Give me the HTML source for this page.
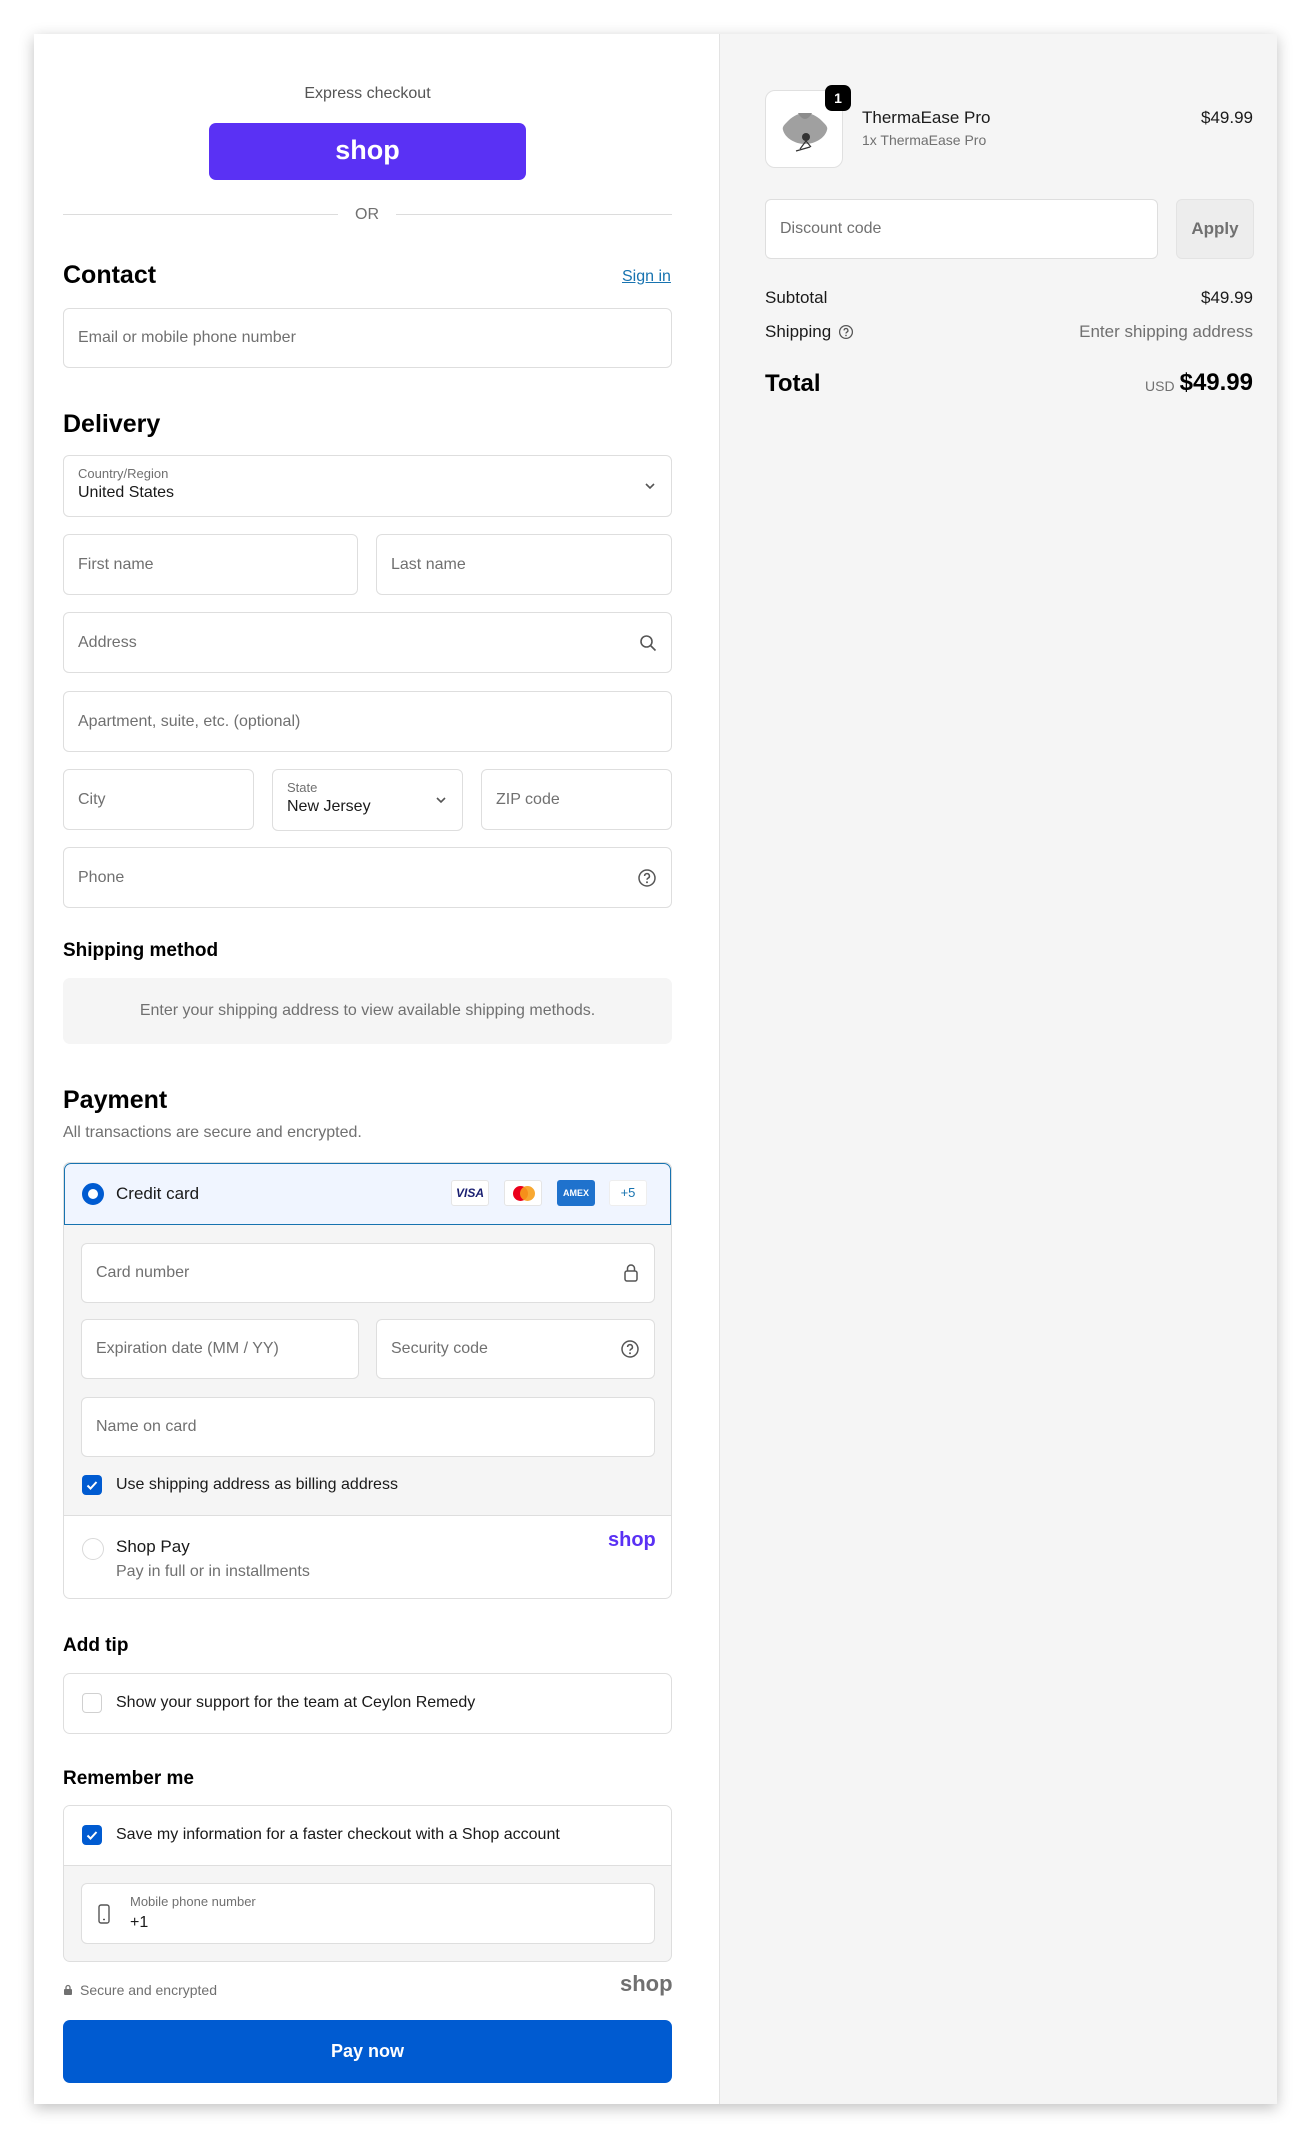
<!DOCTYPE html>
<html><head><meta charset="utf-8">
<style>
*{box-sizing:border-box;margin:0;padding:0}
html,body{width:1312px;height:2138px;background:#fff;font-family:"Liberation Sans",sans-serif;color:#1a1a1a;overflow:hidden}
.a{position:absolute}
#card{position:absolute;left:34px;top:34px;width:1243px;height:2070px;background:#fff;box-shadow:0 4px 14px rgba(0,0,0,.25)}
#right{position:absolute;left:719px;top:34px;width:558px;height:2070px;background:#f5f5f5;border-left:1px solid #e3e3e3}
.in{position:absolute;background:#fff;border:1px solid #dedede;border-radius:6px;font-size:16px;color:#707070}
.in .t{position:absolute;left:14px;top:50%;transform:translateY(-50%);white-space:nowrap}
.lab{position:absolute;left:14px;top:10px;font-size:13px;color:#707070}
.val{position:absolute;left:14px;top:28px;font-size:16px;color:#1a1a1a}
h2{position:absolute;font-size:25px;font-weight:bold;color:#000}
h3{position:absolute;font-size:19px;font-weight:bold;color:#000}
.ic{position:absolute;right:14px;top:50%;transform:translateY(-50%)}
.chk{position:absolute;width:20px;height:20px;border-radius:4px;background:#005bd1}
.box{position:absolute;width:20px;height:20px;border-radius:4px;border:1px solid #d0d0d0;background:#fff}
</style></head><body>
<div id="card"></div>
<div id="right"></div>

<div class="a" style="left:209px;top:85px;width:317px;text-align:center;font-size:16px;color:#555">Express checkout</div>
<div class="a" style="left:209px;top:123px;width:317px;height:57px;background:#5a31f4;border-radius:7px;color:#fff;font-weight:bold;font-size:27px;text-align:center;line-height:54px">shop</div>
<div class="a" style="left:63px;top:214px;width:275px;height:1px;background:#dcdcdc"></div>
<div class="a" style="left:396px;top:214px;width:276px;height:1px;background:#dcdcdc"></div>
<div class="a" style="left:338px;top:206px;width:58px;text-align:center;font-size:16px;color:#707070">OR</div>

<h2 style="left:63px;top:261px">Contact</h2>
<div class="a" style="left:622px;top:268px;font-size:16px;color:#1773b0;text-decoration:underline">Sign in</div>
<div class="in" style="left:63px;top:308px;width:609px;height:60px"><span class="t">Email or mobile phone number</span></div>

<h2 style="left:63px;top:410px">Delivery</h2>
<div class="in" style="left:63px;top:455px;width:609px;height:62px"><span class="lab">Country/Region</span><span class="val">United States</span>
<svg class="ic" width="14" height="14" viewBox="0 0 14 14"><path d="M3 5l4 4 4-4" fill="none" stroke="#555" stroke-width="1.6"/></svg></div>
<div class="in" style="left:63px;top:534px;width:295px;height:61px"><span class="t">First name</span></div>
<div class="in" style="left:376px;top:534px;width:296px;height:61px"><span class="t">Last name</span></div>
<div class="in" style="left:63px;top:612px;width:609px;height:61px"><span class="t">Address</span>
<svg class="ic" width="18" height="18" viewBox="0 0 18 18"><circle cx="7.5" cy="7.5" r="5.5" fill="none" stroke="#555" stroke-width="1.6"/><path d="M11.5 11.5l5 5" stroke="#555" stroke-width="1.6"/></svg></div>
<div class="in" style="left:63px;top:691px;width:609px;height:61px"><span class="t">Apartment, suite, etc. (optional)</span></div>
<div class="in" style="left:63px;top:769px;width:191px;height:61px"><span class="t">City</span></div>
<div class="in" style="left:272px;top:769px;width:191px;height:62px"><span class="lab">State</span><span class="val">New Jersey</span>
<svg class="ic" width="14" height="14" viewBox="0 0 14 14"><path d="M3 5l4 4 4-4" fill="none" stroke="#555" stroke-width="1.6"/></svg></div>
<div class="in" style="left:481px;top:769px;width:191px;height:61px"><span class="t">ZIP code</span></div>
<div class="in" style="left:63px;top:847px;width:609px;height:61px"><span class="t">Phone</span>
<svg class="ic" width="20" height="20" viewBox="0 0 20 20"><circle cx="10" cy="10" r="8" fill="none" stroke="#555" stroke-width="1.5"/><path d="M7.6 8a2.4 2.4 0 1 1 3.4 2.2c-.7.4-1 .8-1 1.6" fill="none" stroke="#555" stroke-width="1.5"/><circle cx="10" cy="14.3" r="1" fill="#555"/></svg></div>

<h3 style="left:63px;top:940px">Shipping method</h3>
<div class="a" style="left:63px;top:978px;width:609px;height:66px;background:#f5f5f5;border-radius:7px;font-size:16px;color:#707070;text-align:center;line-height:66px">Enter your shipping address to view available shipping methods.</div>

<h2 style="left:63px;top:1086px">Payment</h2>
<div class="a" style="left:63px;top:1124px;font-size:16px;color:#707070">All transactions are secure and encrypted.</div>

<div class="a" style="left:63px;top:1162px;width:609px;height:437px;border:1px solid #dedede;border-radius:7px;background:#fff;overflow:hidden">
 <div class="a" style="left:0;top:0;width:607px;height:62px;background:#f0f5ff;border:1px solid #1773b0;border-radius:7px 7px 0 0"></div>
 <div class="a" style="left:18px;top:20px;width:22px;height:22px;border-radius:50%;border:6px solid #005bd1;background:#fff"></div>
 <div class="a" style="left:52px;top:21px;font-size:17px;color:#1a1a1a">Credit card</div>
 <div class="a" style="left:387px;top:17px;width:38px;height:26px;background:#fff;border:1px solid #e5e5e5;border-radius:3px;font:italic bold 12px 'Liberation Sans',sans-serif;color:#1a1f71;text-align:center;line-height:24px">VISA</div>
 <div class="a" style="left:440px;top:17px;width:38px;height:26px;background:#fff;border:1px solid #e5e5e5;border-radius:3px"><div class="a" style="left:8px;top:5px;width:15px;height:15px;border-radius:50%;background:#eb001b"></div><div class="a" style="left:15px;top:5px;width:15px;height:15px;border-radius:50%;background:#f79e1b;opacity:.9"></div></div>
 <div class="a" style="left:493px;top:17px;width:38px;height:26px;background:#1f72cd;border-radius:3px;font:bold 9px 'Liberation Sans',sans-serif;color:#fff;text-align:center;line-height:26px">AMEX</div>
 <div class="a" style="left:545px;top:17px;width:38px;height:26px;background:#fff;border:1px solid #eee;border-radius:3px;font-size:13px;color:#1773b0;text-align:center;line-height:24px">+5</div>
 <div class="a" style="left:0;top:62px;width:609px;height:291px;background:#f5f5f5;border-bottom:1px solid #dedede"></div>
 <div class="in" style="left:17px;top:80px;width:574px;height:60px"><span class="t">Card number</span>
 <svg class="ic" width="18" height="20" viewBox="0 0 18 20"><rect x="3" y="8" width="12" height="10" rx="2" fill="none" stroke="#555" stroke-width="1.5"/><path d="M5.5 8V5.5a3.5 3.5 0 0 1 7 0V8" fill="none" stroke="#555" stroke-width="1.5"/></svg></div>
 <div class="in" style="left:17px;top:156px;width:278px;height:60px"><span class="t">Expiration date (MM / YY)</span></div>
 <div class="in" style="left:312px;top:156px;width:279px;height:60px"><span class="t">Security code</span>
 <svg class="ic" width="20" height="20" viewBox="0 0 20 20"><circle cx="10" cy="10" r="8" fill="none" stroke="#555" stroke-width="1.5"/><path d="M7.6 8a2.4 2.4 0 1 1 3.4 2.2c-.7.4-1 .8-1 1.6" fill="none" stroke="#555" stroke-width="1.5"/><circle cx="10" cy="14.3" r="1" fill="#555"/></svg></div>
 <div class="in" style="left:17px;top:234px;width:574px;height:60px"><span class="t">Name on card</span></div>
 <div class="chk" style="left:18px;top:312px"><svg width="20" height="20" viewBox="0 0 20 20"><path d="M5.5 10.5l3 3 6-6.5" fill="none" stroke="#fff" stroke-width="2"/></svg></div>
 <div class="a" style="left:52px;top:313px;font-size:16px;color:#1a1a1a">Use shipping address as billing address</div>
 <div class="a" style="left:18px;top:375px;width:22px;height:22px;border-radius:50%;border:1px solid #d9d9d9;background:#fff"></div>
 <div class="a" style="left:52px;top:374px;font-size:17px;color:#1a1a1a">Shop Pay</div>
 <div class="a" style="left:52px;top:400px;font-size:16px;color:#707070">Pay in full or in installments</div>
 <div class="a" style="left:544px;top:366px;font-size:20px;font-weight:bold;color:#5a31f4">shop</div>
</div>

<h3 style="left:63px;top:1635px">Add tip</h3>
<div class="a" style="left:63px;top:1673px;width:609px;height:61px;border:1px solid #dedede;border-radius:7px;background:#fff">
 <div class="box" style="left:18px;top:19px"></div>
 <div class="a" style="left:52px;top:20px;font-size:16px;color:#1a1a1a">Show your support for the team at Ceylon Remedy</div>
</div>

<h3 style="left:63px;top:1768px">Remember me</h3>
<div class="a" style="left:63px;top:1805px;width:609px;height:157px;border:1px solid #dedede;border-radius:7px;background:#f5f5f5;overflow:hidden">
 <div class="a" style="left:0;top:0;width:609px;height:60px;background:#fff;border-bottom:1px solid #dedede"></div>
 <div class="chk" style="left:18px;top:19px"><svg width="20" height="20" viewBox="0 0 20 20"><path d="M5.5 10.5l3 3 6-6.5" fill="none" stroke="#fff" stroke-width="2"/></svg></div>
 <div class="a" style="left:52px;top:20px;font-size:16px;color:#1a1a1a">Save my information for a faster checkout with a Shop account</div>
 <div class="in" style="left:17px;top:77px;width:574px;height:61px">
  <svg class="a" style="left:16px;top:20px" width="12" height="20" viewBox="0 0 12 20"><rect x="1" y="1" width="10" height="18" rx="2" fill="none" stroke="#555" stroke-width="1.4"/><path d="M5 15.5h2" stroke="#555" stroke-width="1.4"/></svg>
  <span class="a" style="left:48px;top:10px;font-size:13px;color:#707070">Mobile phone number</span>
  <span class="a" style="left:48px;top:30px;font-size:16px;color:#1a1a1a">+1</span>
 </div>
</div>

<svg class="a" style="left:63px;top:1984px" width="10" height="12" viewBox="0 0 10 12"><rect x="1" y="5" width="8" height="6" rx="1" fill="#707070"/><path d="M3 5V3.5a2 2 0 0 1 4 0V5" fill="none" stroke="#707070" stroke-width="1.3"/></svg>
<div class="a" style="left:80px;top:1982px;font-size:14px;color:#707070">Secure and encrypted</div>
<div class="a" style="left:620px;top:1971px;font-size:22px;font-weight:bold;color:#707070">shop</div>
<div class="a" style="left:63px;top:2020px;width:609px;height:63px;background:#005bd1;border-radius:7px;color:#fff;font-size:18px;font-weight:bold;text-align:center;line-height:63px">Pay now</div>

<!-- right side -->
<div class="a" style="left:765px;top:90px;width:78px;height:78px;background:#fff;border:1px solid #e0e0e0;border-radius:10px;overflow:hidden">
 <svg width="78" height="78" viewBox="0 0 78 78"><path d="M22 30c6-6 12-8 17-8s11 2 17 8c4 4 6 6 5 9-2 8-12 14-22 14S19 47 17 39c-1-3 1-5 5-9z" fill="#a0a0a0"/><path d="M32 22c2 4 5 6 7 6s5-2 7-6" fill="#8c8c8c"/><circle cx="40" cy="46" r="4" fill="#333"/><path d="M40 50l-6 8M40 50l5 6M30 60l14-4" stroke="#333" stroke-width="1.2"/></svg>
</div>
<div class="a" style="left:825px;top:85px;width:26px;height:26px;background:#000;border-radius:7px;color:#fff;font-size:14px;font-weight:bold;text-align:center;line-height:26px">1</div>
<div class="a" style="left:862px;top:108px;font-size:17px;color:#1a1a1a">ThermaEase Pro</div>
<div class="a" style="left:862px;top:132px;font-size:14px;color:#707070">1x ThermaEase Pro</div>
<div class="a" style="left:1153px;top:108px;width:100px;text-align:right;font-size:17px;color:#1a1a1a">$49.99</div>

<div class="in" style="left:765px;top:199px;width:393px;height:60px"><span class="t">Discount code</span></div>
<div class="a" style="left:1176px;top:199px;width:78px;height:60px;background:#ededed;border:1px solid #e3e3e3;border-radius:6px;color:#707070;font-size:17px;font-weight:bold;text-align:center;line-height:58px">Apply</div>

<div class="a" style="left:765px;top:288px;font-size:17px;color:#1a1a1a">Subtotal</div>
<div class="a" style="left:1053px;top:288px;width:200px;text-align:right;font-size:17px;color:#1a1a1a">$49.99</div>
<div class="a" style="left:765px;top:322px;font-size:17px;color:#1a1a1a">Shipping</div>
<svg class="a" style="left:838px;top:324px" width="16" height="16" viewBox="0 0 20 20"><circle cx="10" cy="10" r="8" fill="none" stroke="#555" stroke-width="1.6"/><path d="M7.6 8a2.4 2.4 0 1 1 3.4 2.2c-.7.4-1 .8-1 1.6" fill="none" stroke="#555" stroke-width="1.6"/><circle cx="10" cy="14.3" r="1" fill="#555"/></svg>
<div class="a" style="left:1003px;top:322px;width:250px;text-align:right;font-size:17px;color:#707070">Enter shipping address</div>
<div class="a" style="left:765px;top:370px;font-size:24px;font-weight:bold;color:#000">Total</div>
<div class="a" style="left:1145px;top:378px;font-size:14px;color:#707070">USD</div>
<div class="a" style="left:1153px;top:369px;width:100px;text-align:right;font-size:24px;font-weight:bold;color:#000">$49.99</div>
</body></html>
